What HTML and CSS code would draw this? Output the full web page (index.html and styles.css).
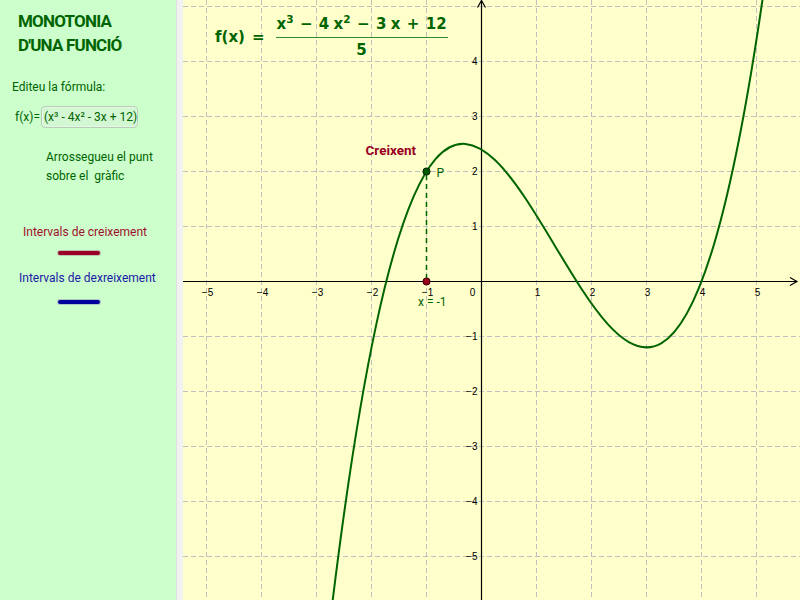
FILE: index.html
```html
<!DOCTYPE html>
<html lang="ca">
<head>
<meta charset="utf-8">
<title>Monotonia d'una funció</title>
<link rel="stylesheet" href="styles.css">
</head>
<body>
<div class="app">
  <aside class="panel">
    <h1 class="title">MONOTONIA<br>D'UNA FUNCIÓ</h1>
    <p class="edit">Editeu la fórmula:</p>
    <div class="frow">
      <span class="flabel">f(x)=</span>
      <span class="finput">(x³ - 4x² - 3x + 12)</span>
    </div>
    <p class="drag">Arrossegueu el punt<br>sobre el&nbsp; gràfic</p>
    <p class="incr">Intervals de creixement</p>
    <div class="bar bar-red"></div>
    <p class="decr">Intervals de dexreixement</p>
    <div class="bar bar-blue"></div>
  </aside>
  <div class="sep"></div>
  <main class="graph">
    <svg class="plot" width="617" height="600" viewBox="183 0 617 600" xmlns="http://www.w3.org/2000/svg">
      <g class="grid">
        <line x1="206.5" y1="0" x2="206.5" y2="600"/>
        <line x1="261.5" y1="0" x2="261.5" y2="600"/>
        <line x1="316.5" y1="0" x2="316.5" y2="600"/>
        <line x1="371.5" y1="0" x2="371.5" y2="600"/>
        <line x1="426.5" y1="0" x2="426.5" y2="600"/>
        <line x1="536.5" y1="0" x2="536.5" y2="600"/>
        <line x1="591.5" y1="0" x2="591.5" y2="600"/>
        <line x1="646.5" y1="0" x2="646.5" y2="600"/>
        <line x1="701.5" y1="0" x2="701.5" y2="600"/>
        <line x1="756.5" y1="0" x2="756.5" y2="600"/>
        <line x1="183" y1="6.5" x2="800" y2="6.5"/>
        <line x1="183" y1="61.5" x2="800" y2="61.5"/>
        <line x1="183" y1="116.5" x2="800" y2="116.5"/>
        <line x1="183" y1="171.5" x2="800" y2="171.5"/>
        <line x1="183" y1="226.5" x2="800" y2="226.5"/>
        <line x1="183" y1="336.5" x2="800" y2="336.5"/>
        <line x1="183" y1="391.5" x2="800" y2="391.5"/>
        <line x1="183" y1="446.5" x2="800" y2="446.5"/>
        <line x1="183" y1="501.5" x2="800" y2="501.5"/>
        <line x1="183" y1="556.5" x2="800" y2="556.5"/>
      </g>
      <g class="axes">
        <line x1="183" y1="281.5" x2="797" y2="281.5"/>
        <polyline points="790,277.5 797,281.5 790,285.5"/>
        <line x1="481.5" y1="600" x2="481.5" y2="0.5"/>
        <polyline points="477.5,7.5 481.5,0.5 485.5,7.5"/>
      </g>
      <g class="xlab">
        <text x="207.5" y="295.5">−5</text>
        <text x="262.5" y="295.5">−4</text>
        <text x="317.5" y="295.5">−3</text>
        <text x="372.5" y="295.5">−2</text>
        <text x="427.5" y="295.5">−1</text>
        <text x="472.5" y="295.5">0</text>
        <text x="537.5" y="295.5">1</text>
        <text x="592.5" y="295.5">2</text>
        <text x="647.5" y="295.5">3</text>
        <text x="702.5" y="295.5">4</text>
        <text x="757.5" y="295.5">5</text>
      </g>
      <g class="ylab">
        <text x="477.5" y="65.2">4</text>
        <text x="477.5" y="120.2">3</text>
        <text x="477.5" y="175.2">2</text>
        <text x="477.5" y="230.2">1</text>
        <text x="477.5" y="340.2">−1</text>
        <text x="477.5" y="395.2">−2</text>
        <text x="477.5" y="450.2">−3</text>
        <text x="477.5" y="505.2">−4</text>
        <text x="477.5" y="560.2">−5</text>
      </g>
      <path class="curve" d="M316.5 743.5 C466.83 -699.7 617.17 1062.21 767.5 -35.83"/>
      <line class="drop" x1="426.5" y1="175" x2="426.5" y2="281.5"/>
      <circle class="pt-red" cx="426.5" cy="281.5" r="3.6"/>
      <circle class="pt-p" cx="426.5" cy="171.5" r="3.6"/>
      <text class="lbl-p" x="436.5" y="177">P</text>
      <text class="lbl-x" x="418" y="306">x = -1</text>
      <text class="lbl-cr" x="365.5" y="154.8">Creixent</text>
    </svg>
    <div class="formula">
      <span class="lhs">f(x)</span>
      <span class="eq">=</span>
      <span class="frac">
        <span class="num">x<sup>3</sup><span class="op">−</span>4<span class="sp"></span>x<sup>2</sup><span class="op">−</span>3<span class="sp"></span>x<span class="op">+</span>12</span>
        <span class="fbar"></span>
        <span class="den">5</span>
      </span>
    </div>
  </main>
</div>
</body>
</html>
```
FILE: styles.css
```css
html, body {
  margin: 0;
  padding: 0;
}
body {
  width: 800px;
  height: 600px;
  overflow: hidden;
  font-family: Roboto, "Liberation Sans", sans-serif;
}
.app {
  display: flex;
  width: 800px;
  height: 600px;
}
.panel {
  width: 176px;
  flex: none;
  background: #ccffcc;
  color: #006400;
  font-size: 12px;
}
.panel p {
  margin: 0;
}
.title {
  margin: 0;
  padding: 9px 0 0 18px;
  font-size: 17px;
  line-height: 24px;
  letter-spacing: -0.8px;
  font-weight: bold;
  color: #006400;
}
.edit {
  margin-top: 22px !important;
  padding-left: 12px;
  line-height: 16px;
}
.frow {
  display: flex;
  align-items: center;
  margin-top: 11px;
  padding-left: 15px;
  height: 22px;
}
.flabel {
  line-height: 16px;
}
.finput {
  box-sizing: border-box;
  height: 22px;
  width: 97px;
  margin-left: 1px;
  padding-left: 2px;
  line-height: 20px;
  white-space: nowrap;
  overflow: visible;
  border: 1px solid #b9ccb9;
  border-radius: 4px;
  background: #d3f7d3;
  box-shadow: inset 0 0 0 1px #e2f9e2;
}
.drag {
  margin-top: 20px !important;
  padding-left: 46px;
  line-height: 18.5px;
}
.incr {
  margin-top: 39px !important;
  padding-left: 23px;
  line-height: 16px;
  color: #a0102e;
}
.decr {
  margin-top: 15px !important;
  padding-left: 19px;
  line-height: 16px;
  color: #1a1aa6;
}
.bar {
  width: 42px;
  height: 4px;
  margin-left: 58px;
  border-radius: 2px;
}
.bar-red {
  margin-top: 11px;
  background: #9b0026;
  box-shadow: 0 0 0 1px rgba(170, 150, 150, 0.55);
}
.bar-blue {
  margin-top: 14px;
  background: #00009c;
  box-shadow: 0 0 0 1px rgba(150, 150, 190, 0.55);
}
.sep {
  width: 6px;
  flex: none;
  background: #f2f2f2;
  border-left: 1px solid #e0e0e0;
}
.graph {
  position: relative;
  flex: 1;
  background: #ffffcc;
  overflow: hidden;
}
.plot {
  display: block;
}
.grid line {
  stroke: #c0c0c0;
  stroke-width: 1;
  stroke-dasharray: 5 3;
}
.axes line, .axes polyline {
  stroke: #000;
  stroke-width: 1.2;
  fill: none;
}
.xlab text, .ylab text {
  font-family: "Liberation Sans", Arial, sans-serif;
  font-size: 10px;
  fill: #000;
}
.xlab text {
  text-anchor: middle;
}
.ylab text {
  text-anchor: end;
}
.curve {
  fill: none;
  stroke: #006400;
  stroke-width: 2;
}
.drop {
  stroke: #006400;
  stroke-width: 1.5;
  stroke-dasharray: 5 4;
}
.pt-red {
  fill: #99001a;
  stroke: #3a0008;
  stroke-width: 1;
}
.pt-p {
  fill: #005a00;
  stroke: #002200;
  stroke-width: 1;
}
.lbl-p {
  font-family: Roboto, sans-serif;
  font-size: 12px;
  fill: #006400;
}
.lbl-x {
  font-family: Roboto, sans-serif;
  font-size: 12px;
  fill: #006400;
}
.lbl-cr {
  font-family: Roboto, sans-serif;
  font-size: 13.5px;
  font-weight: bold;
  fill: #99001f;
}
.formula {
  position: absolute;
  left: 32px;
  top: 14px;
  display: flex;
  align-items: center;
  font-family: "DejaVu Sans", sans-serif;
  font-weight: bold;
  font-size: 15px;
  color: #006400;
}
.lhs {
  line-height: 20px;
}
.eq {
  line-height: 20px;
  margin: 0 11px 0 7px;
}
.frac {
  display: flex;
  flex-direction: column;
}
.num {
  display: flex;
  align-items: baseline;
  line-height: 20px;
  height: 20px;
  padding: 0 1px;
  white-space: nowrap;
}
.num sup {
  font-size: 10.5px;
  line-height: 0;
  position: relative;
  top: -6px;
}
.op {
  margin: 0 6.4px;
}
.sp {
  display: inline-block;
  width: 4.3px;
}
.fbar {
  height: 1px;
  margin: 3px 0 2px;
  background: #2e8b2e;
}
.den {
  line-height: 20px;
  height: 20px;
  text-align: center;
}
```
